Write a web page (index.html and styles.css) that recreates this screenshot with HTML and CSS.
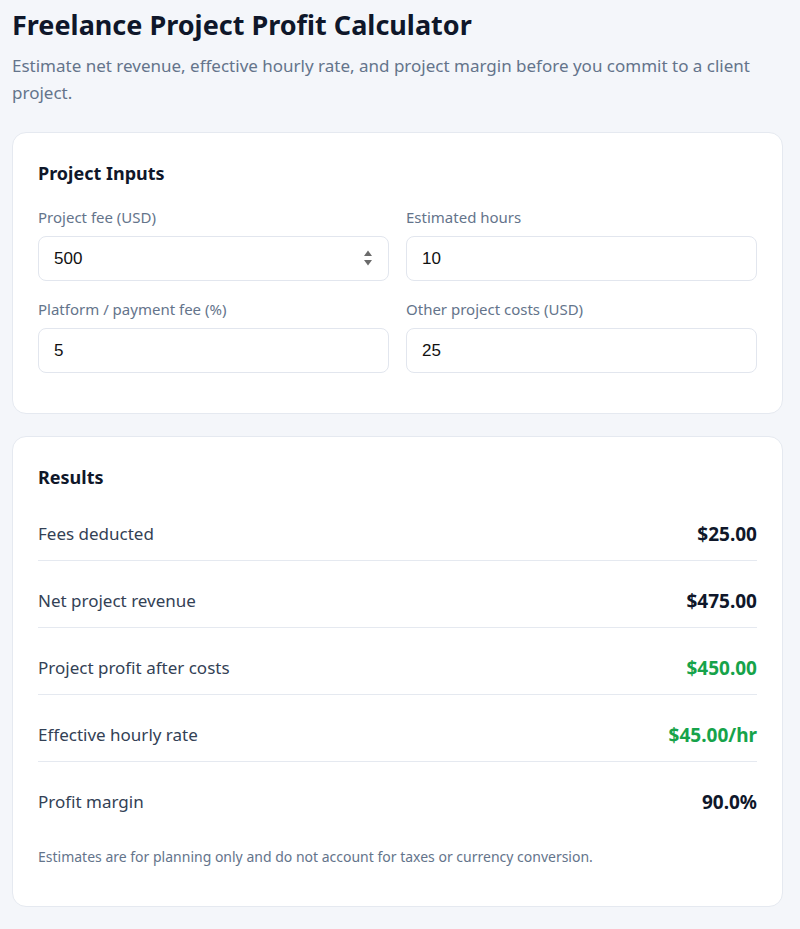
FILE: index.html
```html
<!DOCTYPE html>
<html>

<head>
    <title>Freelance Project Profit Calculator</title>
    <meta charset="utf-8">
    <meta name="viewport" content="width=device-width, initial-scale=1.0">
    <link rel="stylesheet" href="styles.css">
</head>

<body>

    <header>
        <h1>Freelance Project Profit Calculator</h1>
        <p class="intro">Estimate net revenue, effective hourly rate, and project margin before you commit to a client project.</p>
    </header>

    <main>
        <section class="kort">
            <h2>Project Inputs</h2>
            <div class="felter">
                <label class="felt">
                    <span>Project fee (USD)</span>
                    <span class="boks">
                        <input type="text" value="500">
                        <svg class="spin" width="10" height="20" viewBox="0 0 10 20">
                            <path d="M1 8 L5 2.5 L9 8 Z" fill="#6b6b6b" />
                            <path d="M1 12 L5 17.5 L9 12 Z" fill="#6b6b6b" />
                        </svg>
                    </span>
                </label>
                <label class="felt">
                    <span>Estimated hours</span>
                    <span class="boks"><input type="text" value="10"></span>
                </label>
                <label class="felt">
                    <span>Platform / payment fee (%)</span>
                    <span class="boks"><input type="text" value="5"></span>
                </label>
                <label class="felt">
                    <span>Other project costs (USD)</span>
                    <span class="boks"><input type="text" value="25"></span>
                </label>
            </div>
        </section>

        <section class="kort">
            <h2>Results</h2>
            <div class="resultater">
                <div class="linje"><span>Fees deducted</span><strong>$25.00</strong></div>
                <div class="linje"><span>Net project revenue</span><strong>$475.00</strong></div>
                <div class="linje"><span>Project profit after costs</span><strong class="plus">$450.00</strong></div>
                <div class="linje"><span>Effective hourly rate</span><strong class="plus">$45.00/hr</strong></div>
                <div class="linje"><span>Profit margin</span><strong>90.0%</strong></div>
            </div>
            <p class="note">Estimates are for planning only and do not account for taxes or currency conversion.</p>
        </section>
    </main>

</body>

</html>
```

FILE: styles.css
```css
body {
    margin: 0;
    padding: 0 17px 0 12px;
    background-color: #f4f6fa;
    font-family: "Noto Sans", sans-serif;
    color: #0f172a;
}

h1 {
    font-size: 27px;
    font-weight: 700;
    margin: 6px 0 0 0;
    line-height: 38px;
}

.intro {
    color: #64748b;
    font-size: 17px;
    line-height: 27px;
    margin: 8px 0 26px 0;
}

.kort {
    background-color: #ffffff;
    border: 1px solid #e5e9f0;
    border-radius: 14px;
    padding: 26px 25px 40px 25px;
    margin-bottom: 22px;
}

h2 {
    font-size: 18px;
    font-weight: 700;
    margin: 0 0 20px 0;
    line-height: 28px;
}

.felter {
    display: grid;
    grid-template-columns: 1fr 1fr;
    column-gap: 17px;
    row-gap: 18px;
}

.felt {
    display: flex;
    flex-direction: column;
    gap: 9px;
    font-size: 15px;
    color: #64748b;
}

.boks {
    position: relative;
    display: block;
}

.boks input {
    box-sizing: border-box;
    width: 100%;
    height: 45px;
    border: 1px solid #e2e6ee;
    border-radius: 8px;
    padding: 0 15px;
    font-family: "Liberation Sans", Arial, sans-serif;
    font-size: 17px;
    color: #111111;
    background: #ffffff;
}

.spin {
    position: absolute;
    right: 16px;
    top: 12px;
}

.resultater {
    display: flex;
    flex-direction: column;
    margin-top: -3px;
}

.linje {
    display: flex;
    justify-content: space-between;
    align-items: center;
    padding: 14px 0;
    margin-top: 14px;
    border-bottom: 1px solid #e5e9f0;
    font-size: 17px;
    line-height: 24px;
    color: #334155;
}

.linje:first-child {
    margin-top: 0;
}

.linje:last-child {
    border-bottom: none;
}

.linje strong {
    font-size: 19px;
    color: #0f172a;
}

.plus {
    color: #16a34a !important;
}

.note {
    font-size: 14px;
    color: #64748b;
    margin: 19px 0 0 0;
}
```
